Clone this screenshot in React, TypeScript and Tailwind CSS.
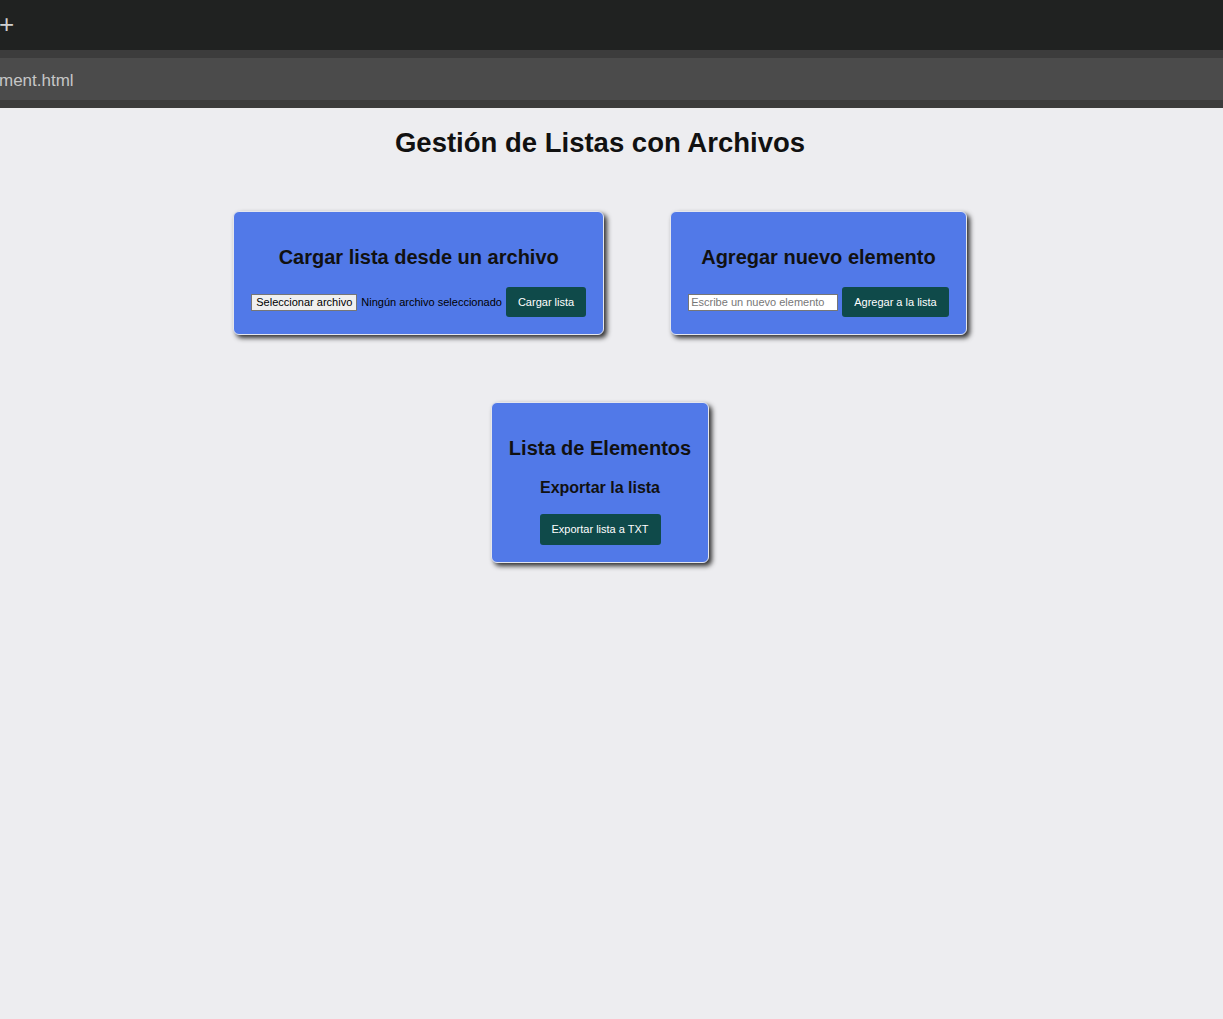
// Gestión de listas con archivos
import { useState } from "react";

const font = "font-['Liberation_Sans',Arial,sans-serif]";

function Card({ children }: { children: React.ReactNode }) {
  return (
    <div className="inline-flex flex-col items-center rounded-[6px] border border-[#e4e6ee] bg-[#5179e8] px-[17px] pb-[17px] pt-4 shadow-[3px_3px_5px_rgba(0,0,0,0.8)]">
      {children}
    </div>
  );
}

export default function App() {
  const [item, setItem] = useState("");

  return (
    <div className={`min-h-[1019px] bg-[#ededf0] ${font}`}>
      {/* barra del navegador */}
      <div className="h-[50px] bg-[#202221] flex items-center">
        <span className="text-[26px] leading-none text-[#d0d0d0] -ml-[1px] -mt-[2px] font-light">+</span>
      </div>
      <div className="h-[8px] bg-[#3c3c3c]" />
      <div className="h-[42px] bg-[#4b4b4b] flex items-center">
        <span className="mt-[3px] text-[17px] text-[#c6c6c6] -ml-[1px]">ment.html</span>
      </div>
      <div className="h-[8px] bg-[#3c3c3c]" />

      <div className="w-[1200px] flex flex-col items-center">
        <h1 className="mt-[19px] text-[27.5px] leading-[31px] font-bold text-[#111]">
          Gestión de Listas con Archivos
        </h1>

        <div className="mt-[53px] flex gap-[66px] items-start">
          <Card>
            <h2 className="mt-[18px] mb-[18px] text-[20px] leading-[23px] font-bold text-[#111]">
              Cargar lista desde un archivo
            </h2>
            <div className="flex items-center">
              <span className="h-[17px] flex items-center border border-[#767676] bg-[#efefef] px-[4px] text-[11px] text-black">
                Seleccionar archivo
              </span>
              <span className="ml-[4px] text-[11px] text-black">Ningún archivo seleccionado</span>
              <button className="ml-[4px] h-[30px] rounded-[3px] bg-[#0f4a4a] px-3 text-[11px] text-white">
                Cargar lista
              </button>
            </div>
          </Card>

          <Card>
            <h2 className="mt-[18px] mb-[18px] text-[20px] leading-[23px] font-bold text-[#111]">
              Agregar nuevo elemento
            </h2>
            <div className="flex items-center">
              <input
                className="h-[17px] w-[150px] border border-[#767676] bg-white px-[2px] text-[11px] text-black placeholder:text-[#777] outline-none"
                placeholder="Escribe un nuevo elemento"
                value={item}
                onChange={(e) => setItem(e.target.value)}
              />
              <button className="ml-[4px] h-[30px] rounded-[3px] bg-[#0f4a4a] px-3 text-[11px] text-white">
                Agregar a la lista
              </button>
            </div>
          </Card>
        </div>

        <div className="mt-[67px]">
          <Card>
            <h2 className="mt-[18px] mb-[18px] text-[20px] leading-[23px] font-bold text-[#111]">
              Lista de Elementos
            </h2>
            <h3 className="mb-[17px] text-[16px] leading-[19px] font-bold text-[#111]">
              Exportar la lista
            </h3>
            <button className="h-[31px] rounded-[3px] bg-[#0f4a4a] px-3 text-[11px] text-white">
              Exportar lista a TXT
            </button>
          </Card>
        </div>
      </div>
    </div>
  );
}
